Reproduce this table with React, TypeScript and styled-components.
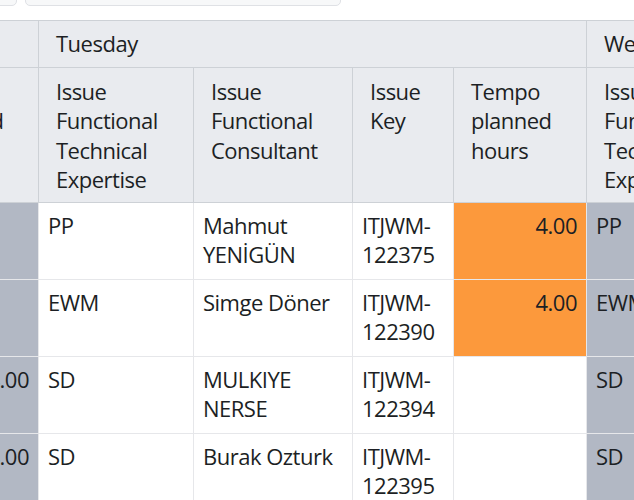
import React from "react";
import styled, { createGlobalStyle } from "styled-components";

const GlobalStyle = createGlobalStyle`
  html, body { margin: 0; padding: 0; background: #ffffff; }
  body { font-family: "Open Sans", "Noto Sans", sans-serif; color: #1c1f24; }
`;

const Page = styled.div`
  width: 634px;
  height: 500px;
  overflow: hidden;
  background: #ffffff;
`;

const Toolbar = styled.div`
  display: flex;
  gap: 8px;
  height: 36px;
  margin-top: -30px;
  margin-left: -100px;
`;

const Field = styled.div<{ $w: number }>`
  width: ${(p) => p.$w}px;
  height: 100%;
  box-sizing: border-box;
  background: #f7f8f9;
  border: 1px solid #dfe1e5;
  border-radius: 5px;
`;

const Table = styled.table`
  border-collapse: collapse;
  table-layout: fixed;
  width: 836px;
  margin-top: 14px;
  margin-left: -95px;
  font-size: 22px;
  line-height: 29.5px;
  letter-spacing: -0.5px;
`;

const DayHead = styled.th`
  background: #e9ebef;
  border: 1px solid #cdd1d6;
  font-weight: 400;
  text-align: left;
  padding: 8px 9px 8px 17px;
  white-space: nowrap;
  overflow: hidden;
`;

const ColHead = styled.th`
  background: #e9ebef;
  border: 1px solid #cdd1d6;
  font-weight: 400;
  text-align: left;
  vertical-align: top;
  padding: 9px 9px 7px 17px;
`;

type Tone = "white" | "grey" | "orange";

const Cell = styled.td<{ $tone?: Tone; $num?: boolean }>`
  background: ${(p) =>
    p.$tone === "grey" ? "#b2b8c4" : p.$tone === "orange" ? "#fc993c" : "#ffffff"};
  border: 1px solid #e6e7ea;
  vertical-align: top;
  text-align: ${(p) => (p.$num ? "right" : "left")};
  padding: 8px 9px 8px 9px;
  height: 60px;
`;

const widths = [133, 155, 159, 101, 133, 155];

const heads = [
  "Tempo planned hours",
  "Issue Functional Technical Expertise",
  "Issue Functional Consultant",
  "Issue Key",
  "Tempo planned hours",
  "Issue Functional Technical Expertise",
];

type Row = {
  mon: string;
  exp: string;
  cons: string;
  key: string;
  hours: string;
  wed: string;
};

const rows: Row[] = [
  { mon: "", exp: "PP", cons: "Mahmut YENİGÜN", key: "ITJWM-122375", hours: "4.00", wed: "PP" },
  { mon: "", exp: "EWM", cons: "Simge Döner", key: "ITJWM-122390", hours: "4.00", wed: "EWM" },
  { mon: "4.00", exp: "SD", cons: "MULKIYE NERSE", key: "ITJWM-122394", hours: "", wed: "SD" },
  { mon: "4.00", exp: "SD", cons: "Burak Ozturk", key: "ITJWM-122395", hours: "", wed: "SD" },
];

export default function App() {
  return (
    <>
      <GlobalStyle />
      <Page>
        <Toolbar>
          <Field $w={117} />
          <Field $w={316} />
        </Toolbar>
        <Table>
          <colgroup>
            {widths.map((w, i) => (
              <col key={i} style={{ width: w }} />
            ))}
          </colgroup>
          <thead>
            <tr>
              <DayHead></DayHead>
              <DayHead colSpan={4}>Tuesday</DayHead>
              <DayHead>Wednesday</DayHead>
            </tr>
            <tr>
              {heads.map((h, i) => (
                <ColHead key={i}>{h}</ColHead>
              ))}
            </tr>
          </thead>
          <tbody>
            {rows.map((r, i) => (
              <tr key={i}>
                <Cell $tone="grey" $num>{r.mon}</Cell>
                <Cell>{r.exp}</Cell>
                <Cell>{r.cons}</Cell>
                <Cell>{r.key}</Cell>
                <Cell $tone={r.hours ? "orange" : "white"} $num>{r.hours}</Cell>
                <Cell $tone="grey">{r.wed}</Cell>
              </tr>
            ))}
          </tbody>
        </Table>
      </Page>
    </>
  );
}
